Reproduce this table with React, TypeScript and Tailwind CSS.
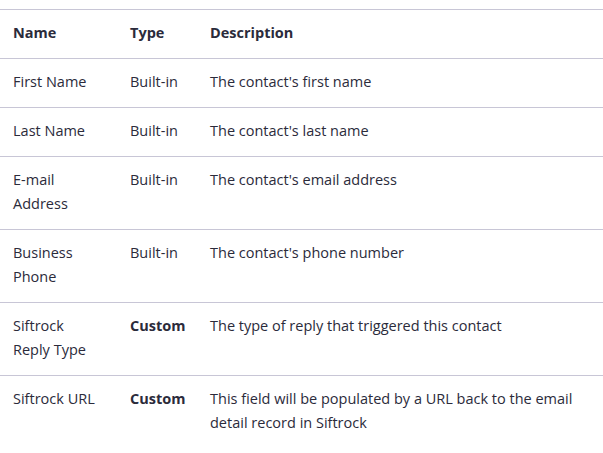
export default function App() {
  const rows: { name: string; type: string; custom?: boolean; desc: string }[] = [
    { name: "First Name", type: "Built-in", desc: "The contact's first name" },
    { name: "Last Name", type: "Built-in", desc: "The contact's last name" },
    { name: "E-mail Address", type: "Built-in", desc: "The contact's email address" },
    { name: "Business Phone", type: "Built-in", desc: "The contact's phone number" },
    { name: "Siftrock Reply Type", type: "Custom", custom: true, desc: "The type of reply that triggered this contact" },
    { name: "Siftrock URL", type: "Custom", custom: true, desc: "This field will be populated by a URL back to the email detail record in Siftrock" },
  ];
  return (
    <div className="w-[603px] h-[453px] bg-white pt-[9px] overflow-hidden" style={{ fontFamily: '"Open Sans", sans-serif' }}>
      <table className="w-full table-fixed border-collapse text-[14.5px] leading-[24px] text-[#2b2b3b]">
        <colgroup>
          <col className="w-[130px]" />
          <col className="w-[80px]" />
          <col />
        </colgroup>
        <thead>
          <tr className="border-t border-b border-[#c8c6d6]">
            <th className="text-left font-bold pl-[13px] pr-[32px] py-[11px] pb-[13px] align-top">Name</th>
            <th className="text-left font-bold pl-0 pr-[8px] py-[11px] pb-[13px] align-top">Type</th>
            <th className="text-left font-bold pl-0 pr-[8px] py-[11px] pb-[13px] align-top">Description</th>
          </tr>
        </thead>
        <tbody>
          {rows.map((r, i) => (
            <tr key={r.name} className={i < rows.length - 1 ? "border-b border-[#c8c6d6]" : ""}>
              <td className="pl-[13px] pr-[32px] pt-[11px] pb-[13px] align-top">{r.name}</td>
              <td className={"pl-0 pr-[8px] pt-[11px] pb-[13px] align-top " + (r.custom ? "font-bold" : "")}>{r.type}</td>
              <td className="pl-0 pr-[8px] pt-[11px] pb-[13px] align-top">{r.desc}</td>
            </tr>
          ))}
        </tbody>
      </table>
    </div>
  );
}
